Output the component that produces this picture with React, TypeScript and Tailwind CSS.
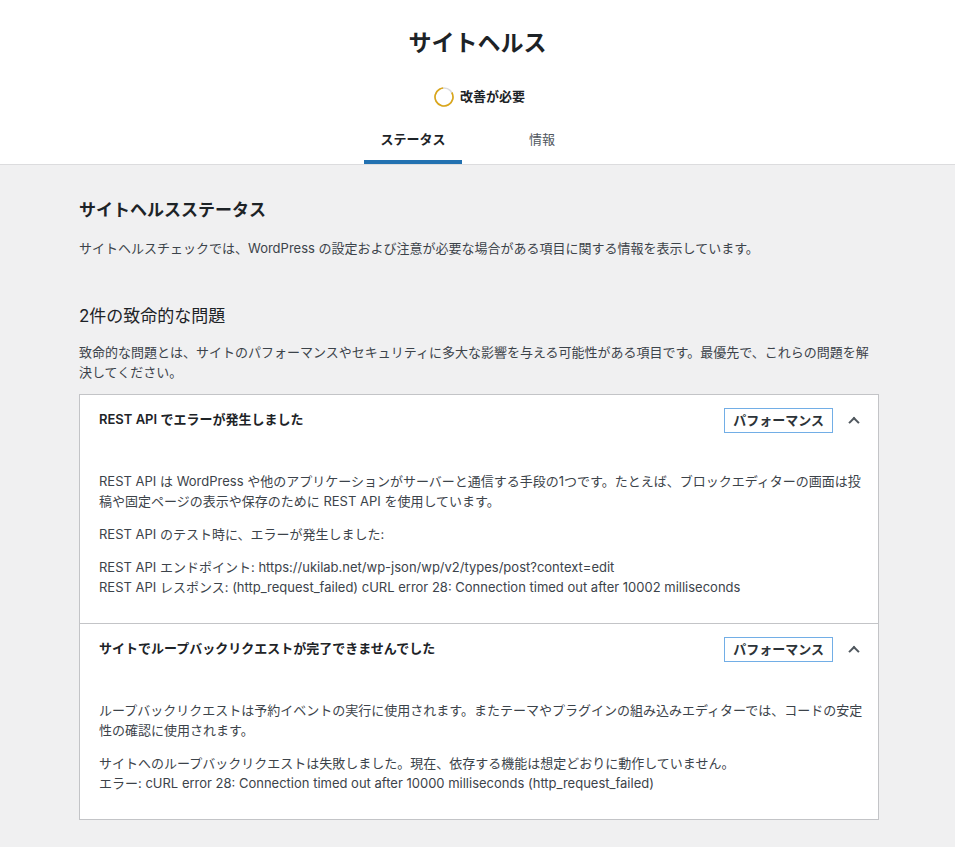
import { useState } from "react"

const issues = [
  {
    title: "REST API でエラーが発生しました",
    badge: "パフォーマンス",
    paragraphs: [
      ["REST API は WordPress や他のアプリケーションがサーバーと通信する手段の1つです。たとえば、ブロックエディターの画面は投稿や固定ページの表示や保存のために REST API を使用しています。"],
      ["REST API のテスト時に、エラーが発生しました:"],
      [
        "REST API エンドポイント: https://ukilab.net/wp-json/wp/v2/types/post?context=edit",
        "REST API レスポンス: (http_request_failed) cURL error 28: Connection timed out after 10002 milliseconds",
      ],
    ],
  },
  {
    title: "サイトでループバックリクエストが完了できませんでした",
    badge: "パフォーマンス",
    paragraphs: [
      ["ループバックリクエストは予約イベントの実行に使用されます。またテーマやプラグインの組み込みエディターでは、コードの安定性の確認に使用されます。"],
      [
        "サイトへのループバックリクエストは失敗しました。現在、依存する機能は想定どおりに動作していません。",
        "エラー: cURL error 28: Connection timed out after 10000 milliseconds (http_request_failed)",
      ],
    ],
  },
]

function StatusCircle() {
  return (
    <svg width="20" height="20" viewBox="0 0 20 20" className="shrink-0">
      <circle cx="10" cy="10" r="9" fill="none" stroke="#dcdcde" strokeWidth="1.6" />
      <circle
        cx="10"
        cy="10"
        r="9"
        fill="none"
        stroke="#dba617"
        strokeWidth="1.6"
        strokeDasharray="46 57"
        transform="rotate(-30 10 10)"
      />
    </svg>
  )
}

export default function App() {
  const [open, setOpen] = useState<number[]>([0, 1])
  const [tab, setTab] = useState(0)

  const toggle = (i: number) => {
    setOpen(open.includes(i) ? open.filter((x) => x !== i) : [...open, i])
  }

  return (
    <div className="min-h-[847px] bg-[#f0f0f1] font-['Inter','Noto_Sans_CJK_JP',sans-serif] text-[13px] text-[#3c434a]">
      <header className="flex flex-col items-center border-b border-[#dcdcde] bg-white pt-[28px]">
        <h1 className="text-[23px] font-semibold leading-[30px] text-[#1d2327]">サイトヘルス</h1>
        <div className="mt-[29px] ml-1 flex h-5 items-center gap-[6px]">
          <StatusCircle />
          <span className="font-semibold text-[#1d2327]">改善が必要</span>
        </div>
        <nav className="mt-[15px] grid grid-cols-2">
          {["ステータス", "情報"].map((label, i) => (
            <button
              key={label}
              onClick={() => setTab(i)}
              className={`mx-4 px-4 pt-2 pb-4 text-center leading-[18px] ${
                tab === i
                  ? "font-semibold text-[#1d2327] shadow-[inset_0_-4px_#2271b1]"
                  : "text-[#50575e]"
              }`}
            >
              {label}
            </button>
          ))}
        </nav>
      </header>

      <main className="ml-[79px] w-[800px] pt-[33px] pb-10">
        <h2 className="text-[17px] font-semibold leading-6 text-[#1d2327]">サイトヘルスステータス</h2>
        <p className="mt-4 leading-5">
          サイトヘルスチェックでは、WordPress の設定および注意が必要な場合がある項目に関する情報を表示しています。
        </p>

        <h3 className="mt-[46px] text-[17px] leading-6 text-[#1d2327]">2件の致命的な問題</h3>
        <p className="mt-[14px] leading-5">
          致命的な問題とは、サイトのパフォーマンスやセキュリティに多大な影響を与える可能性がある項目です。最優先で、これらの問題を解決してください。
        </p>

        <div className="mt-3 border border-[#c3c4c7] bg-white">
          {issues.map((issue, i) => (
            <div key={i} className={i < issues.length - 1 ? "border-b border-[#c3c4c7]" : ""}>
              <button
                onClick={() => toggle(i)}
                className="relative flex h-[50px] w-full items-center justify-between pr-[45px] pl-[19px] text-left"
              >
                <span className="font-semibold text-[#1d2327]">{issue.title}</span>
                <span className="border border-[#72aee6] px-2 pt-[2px] pb-[2px] leading-[19px] font-semibold text-[#2c3338]">
                  {issue.badge}
                </span>
                <span
                  className={`absolute top-1/2 right-[20px] size-2 border-r-2 border-b-2 border-[#50575e] ${
                    open.includes(i) ? "-translate-y-[20%] -rotate-[135deg]" : "-translate-y-[70%] rotate-45"
                  }`}
                />
              </button>
              {open.includes(i) && (
                <div className="pt-[26px] pr-[12px] pb-[26px] pl-[19px]">
                  {issue.paragraphs.map((lines, j) => (
                    <p key={j} className={`leading-5 ${j > 0 ? "mt-[13px]" : ""}`}>
                      {lines.map((line, k) => (
                        <span key={k}>
                          {k > 0 && <br />}
                          {line}
                        </span>
                      ))}
                    </p>
                  ))}
                </div>
              )}
            </div>
          ))}
        </div>
      </main>
    </div>
  )
}
